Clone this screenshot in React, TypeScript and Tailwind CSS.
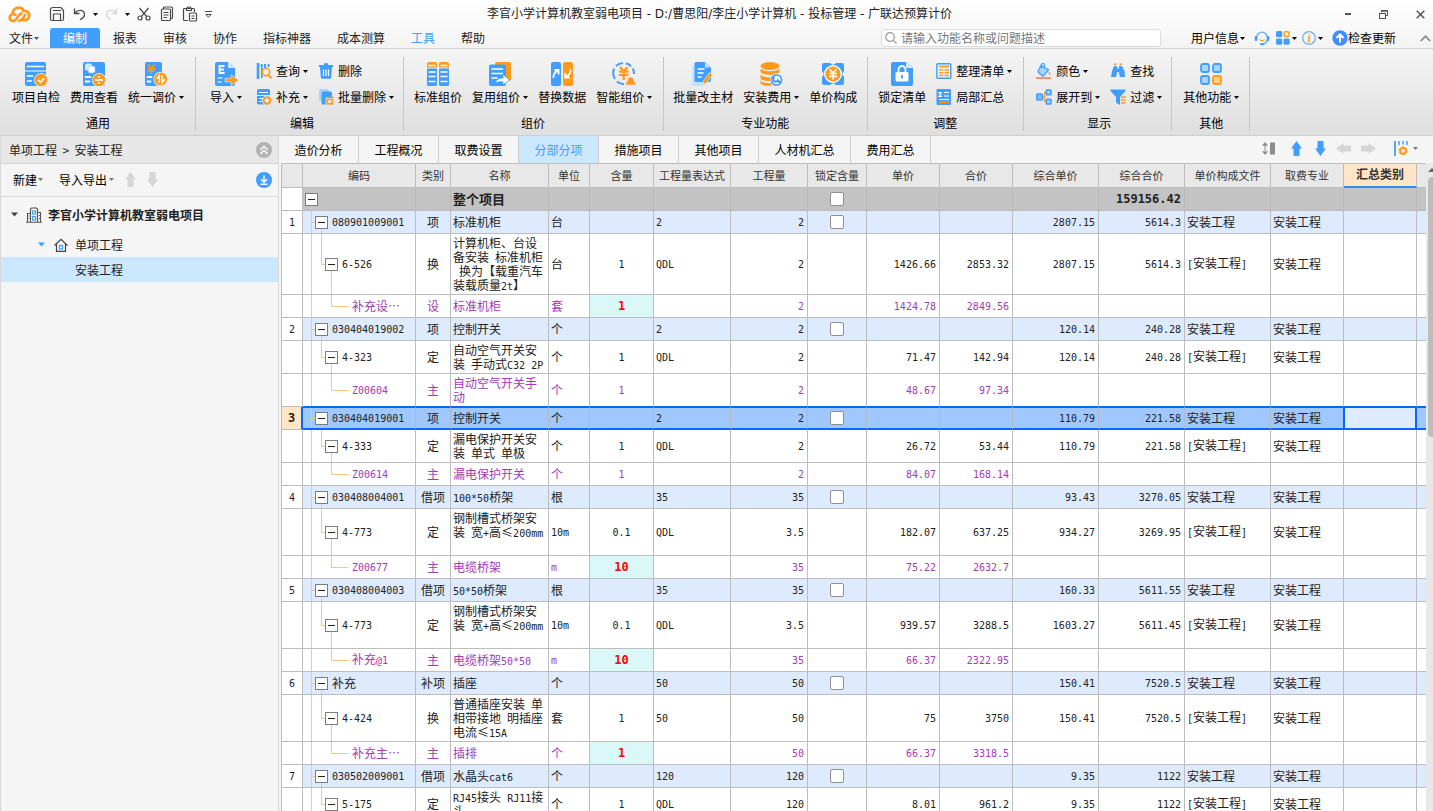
import React from 'react';

const B = '#409eff';
const O = '#ff9a1f';

/* ---------- shared pieces ---------- */

function Caret({ className = 'text-black' }: { className?: string }) {
  return (
    <svg width="5" height="3" viewBox="0 0 5 3" className={`shrink-0 ${className}`} aria-hidden="true">
      <path d="M0 0h5L2.5 3z" fill="currentColor" />
    </svg>
  );
}

function Svg({ size, children }: { size: number; children: React.ReactNode }) {
  return (
    <svg width={size} height={size} viewBox={`0 0 ${size} ${size}`} fill="none" className="shrink-0" aria-hidden="true">
      {children}
    </svg>
  );
}

/* ---------- large ribbon icons, 24 x 24 ---------- */

const icons: Record<string, React.ReactNode> = {
  check: (
    <>
      <rect x="1" y="0" width="21" height="24" rx="2" fill={B} />
      <path d="M3.500 4.500h16M3.500 14h5M3.500 19h4" stroke="#fff" strokeWidth="1.700" strokeLinecap="round" />
      <path d="M1 9h21" stroke="#d9ecff" strokeWidth="1.200" />
      <circle cx="17" cy="18" r="7" fill="#ececec" />
      <circle cx="17" cy="18" r="6.200" fill={O} />
      <path d="M14 18l2.300 2.300 3.900-4" stroke="#fff" strokeWidth="1.800" />
    </>
  ),
  cost: (
    <>
      <rect x="1" y="0" width="22" height="24" rx="2" fill={B} />
      <rect x="3" y="1.500" width="7" height="7" rx="2" fill="#d9ecff" />
      <rect x="6" y="4" width="7" height="7" rx="2" fill="#fff" stroke="#8fc6ff" strokeWidth=".8" />
      <path d="M3.500 15h5M3.500 19.500h4" stroke="#fff" strokeWidth="1.800" strokeLinecap="round" />
      <circle cx="17" cy="18" r="7" fill="#ececec" />
      <circle cx="17" cy="18" r="6.200" fill={O} />
      <path d="M13 18h8" stroke="#fff" strokeWidth="1.700" />
      <circle cx="17" cy="15" r="1.100" fill="#fff" />
      <circle cx="17" cy="21" r="1.100" fill="#fff" />
    </>
  ),
  adjust: (
    <>
      <rect x="1" y="0" width="17" height="24" rx="2" fill={B} />
      <path d="M4 2.500l3.300 4 3.300-4M3.500 6.800h7.600M3.500 9.300h7.600M7.300 6.500V12" stroke={O} strokeWidth="1.600" />
      <path d="M3.500 15h4M3.500 19.500h3" stroke="#fff" strokeWidth="1.800" strokeLinecap="round" />
      <circle cx="16.700" cy="17" r="7.300" fill="#ececec" />
      <circle cx="16.700" cy="17" r="6.500" fill={O} />
      <path d="M15.300 21v-7.500l-2.600 3.300M18.100 13v7.500l2.600-3.300" stroke="#fff" strokeWidth="1.500" />
    </>
  ),
  import: (
    <>
      <path d="M3 0h11l7 6v16a2 2 0 0 1-2 2H3a2 2 0 0 1-2-2V2a2 2 0 0 1 2-2z" fill={B} />
      <path d="M14 0l7 6h-6a1 1 0 0 1-1-1z" fill="#cfe6ff" />
      <path d="M10.500 4H5.500v7h5M5.500 7.500h4.500" stroke="#fff" strokeWidth="1.800" />
      <path d="M3.500 16h5M3.500 20h4" stroke="#cfe6ff" strokeWidth="1.600" />
      <path d="M11 16.300h6v-3.600l7.500 5.500-7.500 5.500V20h-6z" fill={O} stroke="#ececec" strokeWidth=".6" />
    </>
  ),
  standard: (
    <>
      {[1, 13].map((x) => (
        <g key={x}>
          <rect x={x} y="0" width="10" height="9" rx="2" fill={O} />
          <rect x={x} y="6" width="10" height="18" rx="1.500" fill={B} />
          <path d={`M${x + 1.5} 3.500h7`} stroke="#fff" strokeWidth="1.500" />
          <path d={`M${x} 6h10`} stroke="#fff" strokeWidth=".8" />
          <path d={`M${x + 1.5} 10h7M${x + 1.5} 14.500h7M${x + 1.5} 19.500h7`} stroke="#fff" strokeWidth="1.600" />
        </g>
      ))}
    </>
  ),
  reuse: (
    <>
      <rect x="7" y="0" width="16" height="19" rx="2" fill={O} />
      <rect x="1" y="2.500" width="17" height="21.500" rx="2" fill={B} />
      <path d="M3.500 7h11.500M3.500 11.500h11.500M3.500 16h6" stroke="#fff" strokeWidth="1.600" />
      <path d="M7 21c1.500-3.500 4-5 8-5v-3.500l6.500 5.500-6.500 5v-3.200c-3.500-.2-5.500.200-8 1.200z" fill="#fff" stroke={B} strokeWidth=".7" />
    </>
  ),
  replace: (
    <>
      <rect x="1" y="0" width="10" height="24" rx="2" fill={B} />
      <rect x="13" y="0" width="10" height="24" rx="2" fill={O} />
      <path d="M3.300 16c0-3.500 1.200-5.500 4-7.200M4.300 8h4.200v4.500" stroke="#fff" strokeWidth="1.800" />
      <path d="M20.500 7.500c0 3.500-1.200 5.500-4 7.200M19.500 15.500h-4.200V11" stroke="#fff" strokeWidth="1.800" />
    </>
  ),
  smart: (
    <>
      <path
        d="M11 1a11 11 0 0 0-7 3M2.200 6.500A11 11 0 0 0 3 17M5 19.500a11 11 0 0 0 7 2.800M14 1.200a11 11 0 0 1 5 3M20.700 6.500a11 11 0 0 1 1.300 5.500"
        stroke={B}
        strokeWidth="2"
      />
      <path d="M8 5l3.700 4.500L15.500 5M7 9.700h9.500M7 13h9.500M11.700 9.500V18" stroke={O} strokeWidth="2.200" />
      <path d="M15.500 18a3 3 0 0 1 6 0l3 5H13z" fill={O} stroke="#ececec" strokeWidth=".6" />
    </>
  ),
  material: (
    <>
      <rect x="1" y="3" width="13" height="21" rx="2" fill="#c5e2ff" />
      <path d="M5 0h9l6 5.500V18a2 2 0 0 1-2 2H5a1.500 1.500 0 0 1-1.500-1.500v-17A1.500 1.500 0 0 1 5 0z" fill={B} />
      <path d="M14 0l5.500 5.500H14z" fill="#c5e2ff" />
      <path d="M6.500 7h7M6.500 11h6M6.500 15h4" stroke="#fff" strokeWidth="1.500" />
      <path d="M18.500 10.500l3 2-6 8.500-3.500 1.500.500-3.800z" fill={O} stroke="#ececec" strokeWidth=".6" />
    </>
  ),
  install: (
    <>
      <ellipse cx="11" cy="4" rx="9.500" ry="4" fill={O} />
      <path d="M1.500 6.500c3 3.500 16 3.500 19 0V10c-3 4-16 4-19 0zM1.500 12.500c3 3.500 10 3.300 12 2.500v3.500c-4 1-10 .5-12-2zM1.500 18.500c2 2.300 6 3 11 2.500v2.500C6 24.500 2 23 1.500 21z" fill={O} />
      <circle cx="17.500" cy="18" r="6.400" fill="#ececec" />
      <circle cx="17.500" cy="18" r="5" fill="#fff" stroke={B} strokeWidth="1.700" />
      <path d="M15.800 15.300a2.300 2.300 0 1 0 3 3l2.700 2.900" stroke={B} strokeWidth="2" />
    </>
  ),
  compose: (
    <>
      <path d="M1 3a2 2 0 0 1 2-2h6l3 2 3-2h6a2 2 0 0 1 2 2v6l-2 3 2 3v6a2 2 0 0 1-2 2h-6l-3-2-3 2H3a2 2 0 0 1-2-2v-6l2-3-2-3z" fill={B} />
      <circle cx="12" cy="12" r="8.300" fill={O} stroke="#fff" strokeWidth="1.400" />
      <path d="M8.500 7l3.500 4.200L15.500 7M8 11.500h8M8 14.300h8M12 11v6.500" stroke="#fff" strokeWidth="1.700" />
    </>
  ),
  lock: (
    <>
      <path d="M3 0h13l7 6v16a2 2 0 0 1-2 2H3a2 2 0 0 1-2-2V2a2 2 0 0 1 2-2z" fill={B} />
      <path d="M16 0l7 6h-6a1 1 0 0 1-1-1z" fill="#cfe6ff" />
      <rect x="5.500" y="10" width="13" height="9.500" rx="1.500" fill="#fff" />
      <path d="M8.500 10V7.500a3.500 3.500 0 0 1 7 0V10" stroke="#fff" strokeWidth="1.800" />
      <path d="M12 13v3.500" stroke={B} strokeWidth="1.800" />
    </>
  ),
  other: (
    <>
      <rect x="2" y="2" width="8" height="8" rx="2" fill="#a9d3ff" stroke={B} strokeWidth="1.800" />
      <rect x="14" y="2" width="8" height="8" rx="2" fill="#a9d3ff" stroke={B} strokeWidth="1.800" />
      <rect x="2" y="14" width="8" height="8" rx="2" fill="#a9d3ff" stroke={B} strokeWidth="1.800" />
      <rect x="14" y="14" width="8" height="8" rx="2" fill="#ffd08a" stroke={O} strokeWidth="1.800" />
    </>
  ),
};

/* ---------- small ribbon icons, 16 x 16 ---------- */

const smallIcons: Record<string, React.ReactNode> = {
  query: (
    <>
      <path d="M2 0v16" stroke={B} strokeWidth="2.600" />
      <path d="M5.800 1v14" stroke={B} strokeWidth="1.600" />
      <path d="M5.500 1.500v2M9 1v4M12.500 1v3" stroke={B} strokeWidth="2" />
      <circle cx="10" cy="9" r="3.700" stroke={O} strokeWidth="1.600" fill="#fff3e0" />
      <path d="M12.500 12l3 3.500" stroke={O} strokeWidth="1.900" />
    </>
  ),
  supplement: (
    <>
      <rect x="1" y="0" width="13" height="15.500" rx="1.500" fill={B} />
      <path d="M3 3.500h9M3 9.500h4M3 12.500h3" stroke="#fff" strokeWidth="1.200" />
      <path d="M1 6.500h13" stroke="#d9ecff" />
      <circle cx="11" cy="11.500" r="5" fill="#e8e8e8" />
      <circle cx="11" cy="11.500" r="4.300" fill={O} />
      <path d="M11 9v5M8.500 11.500h5" stroke="#fff" strokeWidth="1.400" />
    </>
  ),
  trash: (
    <>
      <path d="M1 3h14M6 1.200h4" stroke={B} strokeWidth="2" />
      <path d="M2 4h12l-.8 10.500a1.500 1.500 0 0 1-1.500 1.300H4.300a1.500 1.500 0 0 1-1.500-1.300z" fill={B} />
      <path d="M5.500 6.500v6.500M8 6.500v6.500M10.500 6.500v6.500" stroke="#fff" strokeWidth="1.200" />
    </>
  ),
  batch: (
    <>
      <rect x="1" y="0" width="10" height="12" rx="1.500" fill="#a9d3ff" />
      <rect x="3.500" y="2.500" width="10.500" height="13" rx="1.500" fill={B} />
      <path d="M8 9.500h7.500v5.500a1 1 0 0 1-1 1h-5.500a1 1 0 0 1-1-1z" fill={O} stroke="#eee" strokeWidth=".7" />
      <path d="M7.500 8.500h8.500" stroke={O} strokeWidth="1.400" />
      <rect x="10" y="11" width="3.500" height="3" fill="#ffe3bb" />
    </>
  ),
  arrange: (
    <>
      <rect x=".8" y=".8" width="14" height="14.400" rx="1" fill="#eaf4ff" stroke={B} strokeWidth="1.400" />
      <path d="M3 3.500h10" stroke={O} strokeWidth="1.800" />
      <path d="M3 7h4M8.500 7H13M3 9.800h4M8.500 9.800H13M3 12.600h4M8.500 12.600H13" stroke={O} strokeWidth="1.500" />
    </>
  ),
  partial: (
    <>
      <rect x=".5" y="0" width="14.500" height="16" rx="1" fill={B} />
      <path d="M6 3.500H3l1.800 2L3 7.500h3M8 3.500h5M8 7h5M3 10.500h10" stroke="#fff" strokeWidth="1.200" />
      <path d="M3 13.300h10" stroke={O} strokeWidth="1.500" />
    </>
  ),
  colour: (
    <>
      <path d="M5 2.500L12.500 7 8 12.300a1.500 1.500 0 0 1-2 .3L2.500 9.500a1.500 1.500 0 0 1-.2-1.800z" fill="#a9d3ff" stroke={B} strokeWidth="1.300" />
      <path d="M5.500 5.500V2a1.500 1.500 0 0 1 3 0v3" stroke={B} strokeWidth="1.200" />
      <path d="M13.500 8.500c1 1.800 1.400 3 0 3.600-1.400-.6-1-1.800 0-3.600z" fill="#ff8f5c" />
      <path d="M0 15h15" stroke="#ff7f4d" strokeWidth="1.600" />
    </>
  ),
  expand: (
    <>
      <path d="M5 8h3.500V3.500H11M8.500 8v4.500H11" stroke={O} strokeWidth="1.200" />
      <rect x=".8" y="5" width="5.500" height="6" rx="1" fill="#7fbdff" stroke={B} strokeWidth="1.700" />
      <rect x="10.300" y="1" width="4.700" height="4.700" rx="1" fill="#a9d3ff" stroke={B} strokeWidth="1.700" />
      <rect x="10.300" y="10.300" width="4.700" height="4.700" rx="1" fill="#a9d3ff" stroke={B} strokeWidth="1.700" />
    </>
  ),
  find: (
    <>
      <path d="M4 3h3v7l-1 4H1l1-6z" fill={B} />
      <path d="M9 3h3l2.500 5 .5 6h-5l-1-4z" fill={B} />
      <path d="M3.800 1.200h2.700M9.500 1.200h2.700" stroke={O} strokeWidth="1.600" />
      <path d="M6.500 5.500h3v3.500h-3z" fill={B} />
    </>
  ),
  filter: (
    <>
      <path d="M.5.500h15v1.500L10 8v8l-4-2.500V8L.5 2z" fill={B} />
      <path d="M11 8h4.500M11 11h4.500M11 14h4.500" stroke={O} strokeWidth="1.500" />
    </>
  ),
};

function Big({ icon, label, caret }: { icon: string; label: string; caret?: boolean }) {
  return (
    <button type="button" className="flex flex-col items-center gap-[3px]">
      <Svg size={24}>{icons[icon]}</Svg>
      <span className="flex items-center gap-[3px] leading-4">
        {label}
        {caret && <Caret />}
      </span>
    </button>
  );
}

function Small({ icon, label, caret }: { icon: string; label: string; caret?: boolean }) {
  return (
    <button type="button" className="flex h-4 items-center leading-4">
      <Svg size={16}>{smallIcons[icon]}</Svg>
      <span className="ml-1 mr-[3px]">{label}</span>
      {caret && <Caret />}
    </button>
  );
}

function Group({ label, className, children }: { label: string; className: string; children: React.ReactNode }) {
  return (
    <section className="flex pt-2 pb-1">
      <div className={`flex flex-col items-center justify-between ${className}`}>
        <div className="flex gap-[10px] pt-[5px]">{children}</div>
        <h2 className="leading-4">{label}</h2>
      </div>
      <div className="w-px self-stretch bg-[#c6c6c6]" />
    </section>
  );
}

function Stack({ className = '', children }: { className?: string; children: React.ReactNode }) {
  return <div className={`flex flex-col gap-[10px] pt-px ${className}`}>{children}</div>;
}

/* ---------- title bar ---------- */

function TitleBar() {
  return (
    <header className="relative flex h-[28px] shrink-0 items-center pl-2">
      <svg width="23" height="17" viewBox="0 0 23 17" fill="none" aria-hidden="true">
        <path
          d="M4.500 7.300C5 3.500 8 1.700 10.800 1.700c2.400 0 4 1.200 4.700 2.900 3.300-.2 5.700 1.900 5.700 4.700 0 3-2.400 4.900-4.700 4.900h-1.300"
          stroke={O}
          strokeWidth="2.800"
          strokeLinecap="round"
          strokeLinejoin="round"
        />
        <path
          d="M7.500 8.800C4.500 7 1.600 9 1.600 11.600c0 2.300 1.800 3.400 3.300 3.400 2.200 0 3-1.500 4.300-3.200 1.600-2.100 2.300-3.800 4.300-4.600M11 15c2-.1 2.900-1.200 4-2.800l2.300-3.400"
          stroke={O}
          strokeWidth="2.600"
          strokeLinecap="round"
          strokeLinejoin="round"
        />
      </svg>
      <div className="ml-[18px] flex items-center text-[#4a4a4a]">
        <button type="button" aria-label="保存">
          <svg width="16" height="16" viewBox="0 0 16 16" fill="none" stroke="currentColor" strokeWidth="1.200" aria-hidden="true">
            <path d="M3.500 1.500h8.500l2.500 3v8.500a1.500 1.500 0 0 1-1.500 1.500H3a1.500 1.500 0 0 1-1.500-1.500V3.500a2 2 0 0 1 2-2zM4 4.500h8M4.500 14.500V8h7v6.500" />
          </svg>
        </button>
        <button type="button" aria-label="撤销" className="ml-2 flex items-center gap-[6px]">
          <svg width="14" height="14" viewBox="0 0 14 14" fill="none" stroke="currentColor" strokeWidth="1.300" aria-hidden="true">
            <path d="M1.500 1.500v5h5M2 6c3-4 9-3.500 9.500 1.200.2 2.500-2 4.300-4.500 5.500" />
          </svg>
          <Caret />
        </button>
        <button type="button" aria-label="恢复" className="ml-[7px] flex items-center gap-[6px]">
          <svg width="14" height="14" viewBox="0 0 14 14" fill="none" stroke="#d4d4d4" strokeWidth="1.300" aria-hidden="true">
            <path d="M11.500 1.500v5h-5M11 6C8 2 2 2.500 1.500 7.200c-.2 2.500 2 4.300 4.500 5.500" />
          </svg>
          <Caret />
        </button>
        <button type="button" aria-label="剪切" className="ml-[7px]">
          <svg width="14" height="14" viewBox="0 0 14 14" fill="none" stroke="currentColor" strokeWidth="1.200" aria-hidden="true">
            <path d="M2.500 1l7.500 9M11.500 1L4 10" />
            <circle cx="3" cy="11" r="2" />
            <circle cx="11" cy="11" r="2" />
          </svg>
        </button>
        <button type="button" aria-label="复制" className="ml-[9px]">
          <svg width="14" height="16" viewBox="0 0 14 16" fill="none" stroke="currentColor" strokeWidth="1.200" aria-hidden="true">
            <path d="M3.500 3V2a1 1 0 0 1 1-1h7a1 1 0 0 1 1 1v9.500a1 1 0 0 1-1 1h-1" />
            <rect x="1.500" y="3" width="9" height="11.500" rx="1" />
            <path d="M3.500 6.500h5M3.500 9h5M3.500 11.500h3.500" />
          </svg>
        </button>
        <button type="button" aria-label="粘贴" className="ml-2">
          <svg width="16" height="16" viewBox="0 0 16 16" fill="none" stroke="currentColor" strokeWidth="1.200" aria-hidden="true">
            <path d="M6 14.500H2.500a1 1 0 0 1-1-1v-10a1 1 0 0 1 1-1h9a1 1 0 0 1 1 1V6M4.500 4.500v-2L6 1h2l1.500 1.500v2z" />
            <rect x="7.500" y="7" width="7" height="8" rx="1" />
            <path d="M9.500 10h3M9.500 12.500h3" />
          </svg>
        </button>
        <button type="button" aria-label="自定义快速访问" className="ml-[7px]">
          <svg width="7" height="7" viewBox="0 0 7 7" fill="none" stroke="currentColor" aria-hidden="true">
            <path d="M0 .5h7M.800 3.500h5.400L3.500 6.200z" />
          </svg>
        </button>
      </div>
      <h1 className="pointer-events-none absolute inset-x-0 pl-[6px] text-center font-['DejaVu_Sans','Noto_Sans_CJK_SC',sans-serif] text-xs leading-4 text-[#222]">
        李官小学计算机教室弱电项目 - D:/曹思阳/李庄小学计算机 - 投标管理 - 广联达预算计价
      </h1>
      <div className="ml-auto flex items-center gap-[28px] pr-2 text-[#555]">
        <button type="button" aria-label="最小化" className="flex h-3 w-[9px] items-center justify-end">
          <span className="h-[2px] w-[6px] bg-[#555]" />
        </button>
        <button type="button" aria-label="还原">
          <svg width="9" height="9" viewBox="0 0 9 9" fill="none" stroke="currentColor" aria-hidden="true">
            <path d="M2.500 2.500v-2h6v5h-2" />
            <path d="M2.500 1h6" strokeWidth="1.500" />
            <rect x=".5" y="3.500" width="6" height="5" />
          </svg>
        </button>
        <button type="button" aria-label="关闭">
          <svg width="9" height="9" viewBox="0 0 9 9" fill="none" stroke="currentColor" strokeWidth="1.500" aria-hidden="true">
            <path d="M.700.700l7.600 7.600M8.300.700L.700 8.300" />
          </svg>
        </button>
      </div>
    </header>
  );
}

/* ---------- menu bar ---------- */

const menus = ['编制', '报表', '审核', '协作', '指标神器', '成本测算', '工具', '帮助'];

function MenuBar() {
  return (
    <nav className="flex h-[21px] shrink-0 items-center border-b border-[#d2d2d2] text-[#222]">
      <button type="button" className="flex w-[50px] items-center gap-px pl-[9px]">
        文件
        <Caret className="text-[#555]" />
      </button>
      {menus.map((m, i) => (
        <button
          key={m}
          type="button"
          className={`h-5 px-[13px] ${i === 0 ? 'rounded-t-[3px] bg-[#409eff] text-white' : m === '工具' ? 'text-[#409eff]' : ''}`}
        >
          {m}
        </button>
      ))}
      <label className="ml-auto flex h-[18px] w-[280px] items-center gap-1 rounded-[3px] border border-[#dcdcdc] bg-white pl-[3px]">
        <svg width="12" height="12" viewBox="0 0 12 12" fill="none" stroke="#999" strokeWidth="1.200" aria-hidden="true">
          <circle cx="5" cy="5" r="4.300" />
          <path d="M8.200 8.200l3.300 3.300" />
        </svg>
        <input
          type="text"
          aria-label="搜索功能"
          placeholder="请输入功能名称或问题描述"
          className="h-4 min-w-0 flex-1 bg-transparent text-xs leading-4 outline-none placeholder:text-[#777]"
        />
      </label>
      <button type="button" className="ml-[30px] flex items-center gap-px text-black">
        用户信息
        <Caret />
      </button>
      <button type="button" aria-label="客服" className="ml-[9px]">
        <svg width="16" height="16" viewBox="0 0 16 16" fill="none" aria-hidden="true">
          <path d="M2.700 7.500a5.300 5.300 0 0 1 10.600 0M13 10c-.5 2.500-2 4-4.500 4.300" stroke="#5aabff" strokeWidth="1.300" />
          <rect x=".7" y="6" width="2.600" height="5" rx="1.200" fill={B} />
          <rect x="12.700" y="6" width="2.600" height="5" rx="1.200" fill={B} />
          <path d="M5.500 9.500c1 1.500 4 1.500 5 0" stroke={O} strokeWidth="1.300" />
          <rect x="6" y="13" width="4" height="2.200" rx="1" fill={B} />
        </svg>
      </button>
      <button type="button" aria-label="应用" className="ml-[6px] flex items-center gap-[2px]">
        <svg width="14" height="14" viewBox="0 0 14 14" fill="none" aria-hidden="true">
          <rect x="0" y="0" width="6.200" height="6.200" rx="1.500" fill={B} />
          <rect x="0" y="7.500" width="6.200" height="6.200" rx="1.500" fill={B} />
          <rect x="7.500" y="7.500" width="6.200" height="6.200" rx="1.500" fill={B} />
          <rect x="8.200" y=".7" width="4.800" height="4.800" rx="1" stroke={O} strokeWidth="1.400" />
        </svg>
        <Caret />
      </button>
      <button type="button" aria-label="关于" className="ml-[5px] flex items-center gap-[2px]">
        <svg width="14" height="14" viewBox="0 0 14 14" fill="none" aria-hidden="true">
          <circle cx="7" cy="7" r="6.300" stroke="#6bb3ff" strokeWidth="1.300" />
          <path d="M6 6h1.500l-1 4.500H8M7.600 3v1.300" stroke={O} strokeWidth="1.400" />
        </svg>
        <Caret />
      </button>
      <button type="button" className="ml-[9px] flex items-center text-black">
        <svg width="16" height="16" viewBox="0 0 16 16" fill="none" aria-hidden="true">
          <circle cx="8" cy="8" r="7.700" fill="#3f8efc" />
          <path d="M8 12.500V5M4.500 8L8 4.500 11.500 8" stroke="#fff" strokeWidth="2" />
        </svg>
        检查更新
      </button>
      <button type="button" aria-label="折叠功能区" className="ml-[24px] mr-[2px]">
        <svg width="11" height="7" viewBox="0 0 11 7" fill="none" stroke="#888" strokeWidth="1.700" aria-hidden="true">
          <path d="M.8 6L5.500 1.200 10.200 6" />
        </svg>
      </button>
    </nav>
  );
}

function Ribbon() {
  return (
    <div className="flex h-[87px] shrink-0 border-b border-[#cfcfcf] bg-linear-to-b from-[#f5f5f5] to-[#dfdfdf] text-black">
      <Group label="通用" className="pl-3 pr-[11px]">
        <Big icon="check" label="项目自检" />
        <Big icon="cost" label="费用查看" />
        <Big icon="adjust" label="统一调价" caret />
      </Group>
      <Group label="编辑" className="pl-[14px] pr-[9px]">
        <Big icon="import" label="导入" caret />
        <Stack className="pl-1">
          <Small icon="query" label="查询" caret />
          <Small icon="supplement" label="补充" caret />
        </Stack>
        <Stack>
          <Small icon="trash" label="删除" />
          <Small icon="batch" label="批量删除" caret />
        </Stack>
      </Group>
      <Group label="组价" className="pl-[10px] pr-[11px]">
        <Big icon="standard" label="标准组价" />
        <Big icon="reuse" label="复用组价" caret />
        <Big icon="replace" label="替换数据" />
        <Big icon="smart" label="智能组价" caret />
      </Group>
      <Group label="专业功能" className="pl-[9px] pr-[10px]">
        <Big icon="material" label="批量改主材" />
        <Big icon="install" label="安装费用" caret />
        <Big icon="compose" label="单价构成" />
      </Group>
      <Group label="调整" className="pl-[10px] pr-[11px]">
        <Big icon="lock" label="锁定清单" />
        <Stack>
          <Small icon="arrange" label="整理清单" caret />
          <Small icon="partial" label="局部汇总" />
        </Stack>
      </Group>
      <Group label="显示" className="pl-3 pr-[9px]">
        <Stack>
          <Small icon="colour" label="颜色" caret />
          <Small icon="expand" label="展开到" caret />
        </Stack>
        <Stack>
          <Small icon="find" label="查找" />
          <Small icon="filter" label="过滤" caret />
        </Stack>
      </Group>
      <Group label="其他" className="pl-[11px] pr-[10px]">
        <Big icon="other" label="其他功能" caret />
      </Group>
    </div>
  );
}

/* ---------- side panel ---------- */

function BlockArrow({ className }: { className: string }) {
  return (
    <svg width="11" height="15" viewBox="0 0 11 15" className={className} aria-hidden="true">
      <path d="M5.500 0L11 7.500H8.500V15h-6V7.500H0z" fill="currentColor" />
    </svg>
  );
}

function Sidebar() {
  return (
    <aside className="flex w-[279px] shrink-0 flex-col border-x border-[#d8d8d8] bg-[#f5f5f5] text-[#222]">
      <div className="flex h-[28px] items-center justify-between border-b border-[#d5d5d5] bg-[#e7e7e7] pl-2 pr-[6px]">
        <span>单项工程&nbsp; &gt;&nbsp; 安装工程</span>
        <button type="button" aria-label="收起">
          <svg width="16" height="16" viewBox="0 0 16 16" fill="none" aria-hidden="true">
            <circle cx="8" cy="8" r="8" fill="#b3b3b3" />
            <path d="M4.500 7.800L8 4.500l3.500 3.300M4.500 11.800L8 8.500l3.500 3.300" stroke="#fff" strokeWidth="1.500" />
          </svg>
        </button>
      </div>
      <div className="flex h-[33px] items-center border-b border-[#d8d8d8] pb-px pl-3 pr-[6px] text-black">
        <button type="button" className="flex items-center gap-px">
          新建
          <Caret className="text-[#777]" />
        </button>
        <button type="button" className="ml-4 flex items-center gap-[2px]">
          导入导出
          <Caret className="text-[#777]" />
        </button>
        <button type="button" aria-label="上移" className="ml-[11px]">
          <BlockArrow className="text-[#d6d6d6]" />
        </button>
        <button type="button" aria-label="下移" className="ml-[11px]">
          <BlockArrow className="rotate-180 text-[#d6d6d6]" />
        </button>
        <button type="button" aria-label="下载" className="ml-auto">
          <svg width="16" height="16" viewBox="0 0 16 16" fill="none" aria-hidden="true">
            <circle cx="8" cy="8" r="8" fill={B} />
            <path d="M8 3.500V10M4.800 7.200L8 10.200l3.200-3M4.500 12.300h7" stroke="#fff" strokeWidth="1.500" />
          </svg>
        </button>
      </div>
      <ul>
        <li className="flex h-[35px] items-center pl-[10px] font-bold">
          <svg width="7" height="5" viewBox="0 0 7 5" aria-hidden="true">
            <path d="M0 .5h7L3.500 4.500z" fill="#444" />
          </svg>
          <svg width="16" height="16" viewBox="0 0 16 16" fill="none" className="ml-2" aria-hidden="true">
            <path d="M4.500 15V2l1-1h5l1 1v13M4 6.500H1.500V15M12 5.500h2.500V15M0 15.300h16" stroke="#555" strokeWidth="1.100" />
            <path d="M2.500 9h1M2.500 11.500h1M12.800 8.500h1M12.800 11.500h1" stroke="#555" />
            <rect x="6.500" y="4" width="3" height="3" stroke={B} strokeWidth="1.200" />
            <rect x="6.500" y="9.500" width="3" height="3.500" stroke={B} strokeWidth="1.200" />
          </svg>
          <span className="ml-[6px]">李官小学计算机教室弱电项目</span>
        </li>
        <li className="flex h-[25px] items-center pl-[37px]">
          <svg width="7" height="5" viewBox="0 0 7 5" aria-hidden="true">
            <path d="M0 .5h7L3.500 4.500z" fill={B} />
          </svg>
          <svg width="14" height="14" viewBox="0 0 14 14" fill="none" className="ml-[9px]" aria-hidden="true">
            <path d="M.5 7.500L7 1.300l6.500 6.200M2.500 6v7.300h9V6" stroke="#444" strokeWidth="1.200" />
            <rect x="5.500" y="7.500" width="3" height="3.500" stroke={B} strokeWidth="1.200" />
          </svg>
          <span className="ml-[7px]">单项工程</span>
        </li>
        <li className="flex h-[25px] items-center bg-[#cce8ff] pl-[74px]">安装工程</li>
      </ul>
    </aside>
  );
}

/* ---------- tabs ---------- */

const tabs = ['造价分析', '工程概况', '取费设置', '分部分项', '措施项目', '其他项目', '人材机汇总', '费用汇总'];

function TabBar() {
  return (
    <div className="flex h-[27px] shrink-0 items-center bg-[#f5f5f5] text-black">
      {tabs.map((t, i) => (
        <button
          key={t}
          type="button"
          className={`h-full border-r border-[#cdcdcd] ${i === 6 ? 'w-[92px]' : 'w-20'} ${
            i === 3 ? 'bg-[#cce8ff] text-[#409eff]' : ''
          }`}
        >
          {t}
        </button>
      ))}
      <div className="ml-auto flex items-center pb-[2px] pr-[15px] text-[#409eff]">
        <button type="button" aria-label="行高">
          <svg width="13" height="13" viewBox="0 0 13 13" fill="#8c8c8c" aria-hidden="true">
            <path d="M3 0l3 3.700H0zM3 13l3-3.700H0zM2.500 3h1v7h-1zM8 .500h5v12H8z" />
          </svg>
        </button>
        <button type="button" aria-label="上移" className="ml-4">
          <BlockArrow className="" />
        </button>
        <button type="button" aria-label="下移" className="ml-[13px]">
          <BlockArrow className="rotate-180" />
        </button>
        <button type="button" aria-label="左移" className="ml-3">
          <BlockArrow className="-rotate-90 text-[#d6d6d6]" />
        </button>
        <button type="button" aria-label="右移" className="ml-[14px]">
          <BlockArrow className="rotate-90 text-[#d6d6d6]" />
        </button>
        <button type="button" aria-label="列设置" className="ml-[20px] flex items-center gap-[5px]">
          <svg width="14" height="15" viewBox="0 0 14 15" fill="none" aria-hidden="true">
            <path d="M1 0v15" stroke={B} strokeWidth="1.800" />
            <path d="M5 0v4M9 0v3.500M13 0v4" stroke={B} strokeWidth="1.500" />
            <circle cx="9" cy="9.800" r="2.900" stroke={O} strokeWidth="2" />
            <circle cx="9" cy="9.800" r="3.900" stroke={O} strokeWidth="1.400" strokeDasharray="2 2.080" />
          </svg>
          <Caret className="text-[#777]" />
        </button>
      </div>
    </div>
  );
}

/* ---------- bill table ---------- */

interface Row {
  n?: string;
  level: 1 | 2 | 3;
  code: string;
  kind: string;
  name: string[];
  unit: string;
  qty?: string;
  hot?: boolean;
  expr?: string;
  amount: string;
  price?: string;
  total?: string;
  compPrice?: string;
  compTotal?: string;
}

const rows: Row[] = [
  { n: '1', level: 1, code: '080901009001', kind: '项', name: ['标准机柜'], unit: '台', expr: '2', amount: '2', compPrice: '2807.15', compTotal: '5614.3' },
  { level: 2, code: '6-526', kind: '换', name: ['计算机柜、台设', '备安装 标准机柜', ' 换为【载重汽车', '装载质量2t】'], unit: '台', qty: '1', expr: 'QDL', amount: '2', price: '1426.66', total: '2853.32', compPrice: '2807.15', compTotal: '5614.3' },
  { level: 3, code: '补充设…', kind: '设', name: ['标准机柜'], unit: '套', qty: '1', hot: true, amount: '2', price: '1424.78', total: '2849.56' },
  { n: '2', level: 1, code: '030404019002', kind: '项', name: ['控制开关'], unit: '个', expr: '2', amount: '2', compPrice: '120.14', compTotal: '240.28' },
  { level: 2, code: '4-323', kind: '定', name: ['自动空气开关安', '装 手动式C32 2P'], unit: '个', qty: '1', expr: 'QDL', amount: '2', price: '71.47', total: '142.94', compPrice: '120.14', compTotal: '240.28' },
  { level: 3, code: 'Z00604', kind: '主', name: ['自动空气开关手', '动'], unit: '个', qty: '1', amount: '2', price: '48.67', total: '97.34' },
  { n: '3', level: 1, code: '030404019001', kind: '项', name: ['控制开关'], unit: '个', expr: '2', amount: '2', compPrice: '110.79', compTotal: '221.58' },
  { level: 2, code: '4-333', kind: '定', name: ['漏电保护开关安', '装 单式 单极'], unit: '个', qty: '1', expr: 'QDL', amount: '2', price: '26.72', total: '53.44', compPrice: '110.79', compTotal: '221.58' },
  { level: 3, code: 'Z00614', kind: '主', name: ['漏电保护开关'], unit: '个', qty: '1', amount: '2', price: '84.07', total: '168.14' },
  { n: '4', level: 1, code: '030408004001', kind: '借项', name: ['100*50桥架'], unit: '根', expr: '35', amount: '35', compPrice: '93.43', compTotal: '3270.05' },
  { level: 2, code: '4-773', kind: '定', name: ['钢制槽式桥架安', '装 宽+高≤200mm', ' '], unit: '10m', qty: '0.1', expr: 'QDL', amount: '3.5', price: '182.07', total: '637.25', compPrice: '934.27', compTotal: '3269.95' },
  { level: 3, code: 'Z00677', kind: '主', name: ['电缆桥架'], unit: 'm', qty: '10', hot: true, amount: '35', price: '75.22', total: '2632.7' },
  { n: '5', level: 1, code: '030408004003', kind: '借项', name: ['50*50桥架'], unit: '根', expr: '35', amount: '35', compPrice: '160.33', compTotal: '5611.55' },
  { level: 2, code: '4-773', kind: '定', name: ['钢制槽式桥架安', '装 宽+高≤200mm', ' '], unit: '10m', qty: '0.1', expr: 'QDL', amount: '3.5', price: '939.57', total: '3288.5', compPrice: '1603.27', compTotal: '5611.45' },
  { level: 3, code: '补充@1', kind: '主', name: ['电缆桥架50*50'], unit: 'm', qty: '10', hot: true, amount: '35', price: '66.37', total: '2322.95' },
  { n: '6', level: 1, code: '补充', kind: '补项', name: ['插座'], unit: '个', expr: '50', amount: '50', compPrice: '150.41', compTotal: '7520.5' },
  { level: 2, code: '4-424', kind: '换', name: ['普通插座安装 单', '相带接地 明插座', '电流≤15A'], unit: '套', qty: '1', expr: '50', amount: '50', price: '75', total: '3750', compPrice: '150.41', compTotal: '7520.5' },
  { level: 3, code: '补充主…', kind: '主', name: ['插排'], unit: '个', qty: '1', hot: true, amount: '50', price: '66.37', total: '3318.5' },
  { n: '7', level: 1, code: '030502009001', kind: '借项', name: ['水晶头cat6'], unit: '个', expr: '120', amount: '120', compPrice: '9.35', compTotal: '1122' },
  { level: 2, code: '5-175', kind: '定', name: ['RJ45接头 RJ11接', '头'], unit: '个', qty: '1', expr: 'QDL', amount: '120', price: '8.01', total: '961.2', compPrice: '9.35', compTotal: '1122' },
];

const SELECTED = 6;
const heights = ['h-[23px]', 'h-[33px]', 'h-[47px]', 'h-[61px]'];

/* Half-width runs take a monospaced face so that two of them equal one ideograph. */
function Txt({ strong, children }: { strong?: boolean; children?: string }) {
  if (!children) return null;
  return (
    <>
      {children.split(/([\x20-\x7e]+)/).map((part, i) =>
        i % 2 ? (
          <span
            key={i}
            className={`whitespace-pre font-['DejaVu_Sans_Mono','Noto_Sans_CJK_SC',monospace] ${strong ? 'text-xs' : 'text-[10px]'}`}
          >
            {part}
          </span>
        ) : (
          part
        ),
      )}
    </>
  );
}

function Toggle() {
  return (
    <span className="flex w-[13px] shrink-0 flex-col self-stretch">
      <span className="flex-1" />
      <button
        type="button"
        aria-label="折叠"
        className="flex h-[13px] items-center justify-center border border-[#7d7d7d] bg-white"
      >
        <span className="h-px w-[7px] bg-[#222]" />
      </button>
      <span className="ml-[6px] flex-1 border-l border-[#ffc677]" />
    </span>
  );
}

function CodeCell({ row }: { row: Row }) {
  return (
    <div className="flex h-full items-center pl-2">
      {row.level === 1 && (
        <>
          <span className="flex w-1 items-center self-stretch border-l border-[#ffc677]">
            <span className="h-px w-full bg-[#ffc677]" />
          </span>
          <Toggle />
        </>
      )}
      {row.level === 2 && (
        <>
          <span className="w-[10px] self-stretch border-l border-[#ffc677]" />
          <span className="flex w-1 flex-col self-stretch">
            <span className="flex-1 border-b border-l border-[#ffc677]" />
            <span className="flex-1" />
          </span>
          <Toggle />
        </>
      )}
      {row.level === 3 && (
        <>
          <span className="w-5 self-stretch border-l border-[#ffc677]" />
          <span className="flex w-[17px] flex-col self-stretch">
            <span className="flex-1 border-b border-l border-[#ffc677]" />
            <span className="flex-1" />
          </span>
        </>
      )}
      <span className="ml-1 whitespace-nowrap">
        <Txt>{row.code}</Txt>
      </span>
    </div>
  );
}

const columns: [string, string][] = [
  ['编码', 'w-[113px]'],
  ['类别', 'w-[35px]'],
  ['名称', 'w-[98px]'],
  ['单位', 'w-[41px]'],
  ['含量', 'w-[64px]'],
  ['工程量表达式', 'w-[77px]'],
  ['工程量', 'w-[77px]'],
  ['锁定含量', 'w-[59px]'],
  ['单价', 'w-[73px]'],
  ['合价', 'w-[73px]'],
  ['综合单价', 'w-[86px]'],
  ['综合合价', 'w-[86px]'],
  ['单价构成文件', 'w-[86px]'],
  ['取费专业', 'w-[73px]'],
  ['汇总类别', 'w-[73px]'],
];

function Check({ label }: { label: string }) {
  return (
    <input
      type="checkbox"
      aria-label={label}
      className="mx-auto block size-[14px] appearance-none rounded-[2px] border border-[#8f8f8f] bg-white"
    />
  );
}

function BillRow({ row, index }: { row: Row; index: number }) {
  const selected = index === SELECTED;
  const above = index === SELECTED - 1;
  const rim = selected
    ? 'border-t border-b-2 border-y-[#0a66ff]'
    : above
      ? 'border-b border-b-[#0a66ff]'
      : 'border-b border-b-[#bdbdbd]';
  const base = `${rim} p-0 whitespace-nowrap`;
  const c = `${base} border-r ${selected ? 'border-r-[#b0b9c4]' : 'border-r-[#bdbdbd]'}`;
  const left = `${c} pl-[2px] text-left`;
  const right = `${c} pr-[3px] text-right`;
  const centre = `${c} text-center`;
  const tone = selected ? 'bg-[#a0c8ff]' : row.level === 1 ? 'bg-[#deeafd]' : 'bg-white';
  const height = heights[row.name.length - 1];
  const priced = row.level !== 3;
  return (
    <tr className={`${tone} ${row.level === 3 ? 'text-[#a33bb3]' : 'text-[#222]'}`}>
      <td
        className={`border-b border-b-[#bdbdbd] p-0 text-center text-[#222] ${height} ${
          selected ? 'border-r-2 border-r-[#0a66ff] bg-[#ffe6c6] font-bold' : 'border-r border-r-[#bdbdbd] bg-white'
        }`}
      >
        <Txt strong={selected}>{row.n}</Txt>
      </td>
      <td className={`${c} ${height}`}>
        <CodeCell row={row} />
      </td>
      <td className={centre}>{row.kind}</td>
      <td className={`${left} overflow-hidden`}>
        {row.name.map((line, i) => (
          <div key={i} className="h-[14px]">
            <Txt>{line}</Txt>
          </div>
        ))}
      </td>
      <td className={left}>
        <Txt>{row.unit}</Txt>
      </td>
      <td className={`${centre} ${row.hot ? 'bg-[#dbf8f8] font-bold text-[#f00]' : ''}`}>
        <Txt strong={row.hot}>{row.qty}</Txt>
      </td>
      <td className={left}>
        <Txt>{row.expr}</Txt>
      </td>
      <td className={right}>
        <Txt>{row.amount}</Txt>
      </td>
      <td className={centre}>{row.level === 1 && <Check label={`锁定含量 ${row.code}`} />}</td>
      <td className={right}>
        <Txt>{row.price}</Txt>
      </td>
      <td className={right}>
        <Txt>{row.total}</Txt>
      </td>
      <td className={right}>
        <Txt>{row.compPrice}</Txt>
      </td>
      <td className={right}>
        <Txt>{row.compTotal}</Txt>
      </td>
      <td className={left}>
        <Txt>{priced ? (row.level === 1 ? '安装工程' : '[安装工程]') : ''}</Txt>
      </td>
      <td className={`${base} border-r pl-[2px] text-left ${selected ? 'border-r-[#0a66ff]' : 'border-r-[#bdbdbd]'}`}>
        {priced ? '安装工程' : ''}
      </td>
      <td
        className={`${base} ${
          selected ? 'border-l border-r-2 border-x-[#0a66ff] bg-[#deeafd]' : 'border-r border-r-[#bdbdbd]'
        }`}
      />
      <td className={base} />
    </tr>
  );
}

function BillTable() {
  return (
    <table className="w-full table-fixed border-separate border-spacing-0 border-l border-[#bdbdbd] text-xs leading-[14px]">
      <thead>
        <tr className="bg-[#e8e8e8] text-[11px] text-[#333]">
          <th className="h-[25px] w-[21px] border-y border-r border-[#bdbdbd] p-0" aria-label="序号" />
          {columns.map(([label, width], i) => (
            <th
              key={label}
              className={`border-t border-r border-t-[#bdbdbd] border-r-[#bdbdbd] p-0 pb-[2px] ${width} ${
                i === 14
                  ? 'border-b-2 border-b-[#2f8ef5] bg-[#ffe6c6] text-xs font-bold'
                  : 'border-b border-b-[#bdbdbd] font-normal'
              }`}
            >
              {label}
            </th>
          ))}
          <th className="border-y border-[#bdbdbd] p-0" aria-label="空白" />
        </tr>
      </thead>
      <tbody>
        <tr className="bg-[#c3c3c3] font-bold text-[#222]">
          <td className="h-[23px] border-b border-r border-[#bdbdbd] bg-white p-0" />
          <td className="h-[23px] border-b border-r border-[#bababa] p-0">
            <div className="flex h-full pl-[2px]">
              <Toggle />
            </div>
          </td>
          {columns.slice(1).map(([label]) => (
            <td
              key={label}
              className={`border-b border-r border-[#bababa] p-0 whitespace-nowrap ${
                label === '综合合价' ? 'pr-[3px] text-right' : label === '名称' ? 'pl-[2px]' : ''
              }`}
            >
              {label === '名称' && <span className="text-[13px]">整个项目</span>}
              {label === '综合合价' && <Txt strong>159156.42</Txt>}
              {label === '锁定含量' && <Check label="锁定含量 整个项目" />}
            </td>
          ))}
          <td className="border-b border-[#bababa] p-0" />
        </tr>
        {rows.map((row, i) => (
          <BillRow key={i} row={row} index={i} />
        ))}
      </tbody>
    </table>
  );
}

export default function App() {
  return (
    <div className="flex h-screen flex-col overflow-hidden bg-[#f5f5f5] font-['Noto_Sans_CJK_SC',sans-serif] text-xs leading-4">
      <div className="flex shrink-0 flex-col bg-linear-to-b from-white to-[#f3f3f3]">
        <TitleBar />
        <MenuBar />
      </div>
      <Ribbon />
      <div className="flex min-h-0 flex-1">
        <Sidebar />
        <main className="flex min-w-0 flex-1 flex-col">
          <TabBar />
          <div className="flex min-h-0 flex-1 pl-[2px]">
            <div className="min-w-0 flex-1 overflow-hidden bg-white">
              <BillTable />
            </div>
            <div className="flex w-[7px] shrink-0 flex-col items-end overflow-hidden bg-[#e8e8e8] pt-[5px]" aria-hidden="true">
              <svg width="5" height="4" viewBox="0 0 5 4">
                <path d="M4 0l4 4H0z" fill="#666" />
              </svg>
              <div className="mt-[5px] h-[260px] w-[5px] rounded-l-[4px] bg-[#bdbdbd]" />
            </div>
          </div>
        </main>
      </div>
    </div>
  );
}
